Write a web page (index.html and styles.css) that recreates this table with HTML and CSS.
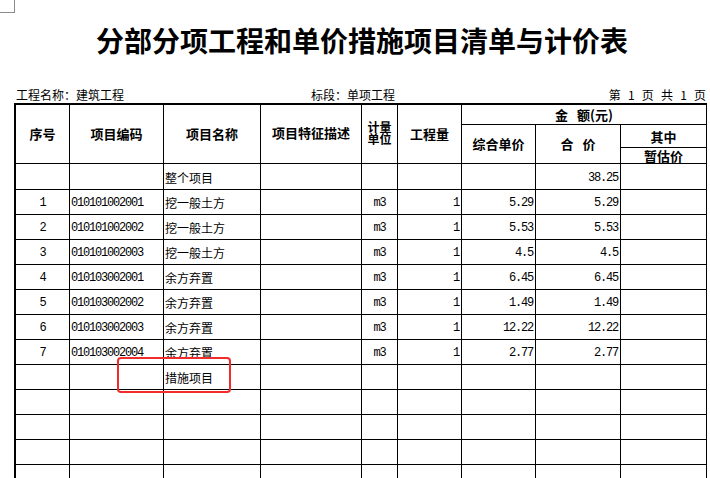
FILE: index.html
```html
<!DOCTYPE html>
<html lang="zh-CN">
<head>
<meta charset="utf-8">
<title>分部分项工程和单价措施项目清单与计价表</title>
<link rel="stylesheet" href="styles.css">
</head>
<body>
<div class="page">
  <div class="corner"></div>
  <h1 class="title">分部分项工程和单价措施项目清单与计价表</h1>
  <div class="meta">
    <span>工程名称：建筑工程</span>
    <span>标段：单项工程</span>
    <span class="pages">第 1 页 共 1 页</span>
  </div>
  <table class="bill">
    <colgroup>
      <col class="c1"><col class="c2"><col class="c3"><col class="c4"><col class="c5"><col class="c6"><col class="c7"><col class="c8"><col class="c9">
    </colgroup>
    <thead>
      <tr class="hr1">
        <th rowspan="3">序号</th>
        <th rowspan="3">项目编码</th>
        <th rowspan="3">项目名称</th>
        <th rowspan="3" class="desc">项目特征描述</th>
        <th rowspan="3" class="unit"><span class="ln">计量</span><span class="ln">单位</span></th>
        <th rowspan="3">工程量</th>
        <th colspan="3"><span class="gap">金</span>额(元)</th>
      </tr>
      <tr class="hr2">
        <th rowspan="2">综合单价</th>
        <th rowspan="2"><span class="gap">合</span>价</th>
        <th class="sub">其中</th>
      </tr>
      <tr class="hr3">
        <th class="sub">暂估价</th>
      </tr>
    </thead>
    <tbody>
      <tr class="first">
        <td></td><td></td><td class="name">整个项目</td><td></td><td></td><td></td><td></td><td class="num">38.25</td><td></td>
      </tr>
      <tr>
        <td class="seq">1</td><td class="code">010101002001</td><td class="name">挖一般土方</td><td></td><td class="mu">m3</td><td class="num">1</td><td class="num">5.29</td><td class="num">5.29</td><td></td>
      </tr>
      <tr>
        <td class="seq">2</td><td class="code">010101002002</td><td class="name">挖一般土方</td><td></td><td class="mu">m3</td><td class="num">1</td><td class="num">5.53</td><td class="num">5.53</td><td></td>
      </tr>
      <tr>
        <td class="seq">3</td><td class="code">010101002003</td><td class="name">挖一般土方</td><td></td><td class="mu">m3</td><td class="num">1</td><td class="num">4.5</td><td class="num">4.5</td><td></td>
      </tr>
      <tr>
        <td class="seq">4</td><td class="code">010103002001</td><td class="name">余方弃置</td><td></td><td class="mu">m3</td><td class="num">1</td><td class="num">6.45</td><td class="num">6.45</td><td></td>
      </tr>
      <tr>
        <td class="seq">5</td><td class="code">010103002002</td><td class="name">余方弃置</td><td></td><td class="mu">m3</td><td class="num">1</td><td class="num">1.49</td><td class="num">1.49</td><td></td>
      </tr>
      <tr>
        <td class="seq">6</td><td class="code">010103002003</td><td class="name">余方弃置</td><td></td><td class="mu">m3</td><td class="num">1</td><td class="num">12.22</td><td class="num">12.22</td><td></td>
      </tr>
      <tr>
        <td class="seq">7</td><td class="code">010103002004</td><td class="name">余方弃置</td><td></td><td class="mu">m3</td><td class="num">1</td><td class="num">2.77</td><td class="num">2.77</td><td></td>
      </tr>
      <tr>
        <td></td><td></td><td class="name">措施项目</td><td></td><td></td><td></td><td></td><td></td><td></td>
      </tr>
      <tr><td></td><td></td><td></td><td></td><td></td><td></td><td></td><td></td><td></td></tr>
      <tr><td></td><td></td><td></td><td></td><td></td><td></td><td></td><td></td><td></td></tr>
      <tr><td></td><td></td><td></td><td></td><td></td><td></td><td></td><td></td><td></td></tr>
      <tr><td></td><td></td><td></td><td></td><td></td><td></td><td></td><td></td><td></td></tr>
    </tbody>
  </table>
  <div class="highlight"></div>
</div>
</body>
</html>
```
FILE: styles.css
```css
html, body {
  margin: 0;
  padding: 0;
  background: #fff;
}

body {
  font-family: "Noto Sans CJK SC", "Noto Sans", sans-serif;
  color: #000;
  overflow: hidden;
}

.page {
  position: relative;
  width: 710px;
  height: 478px;
  overflow: hidden;
}

.corner {
  width: 14px;
  height: 12px;
  border-right: 1px solid #8a8a8a;
  border-bottom: 1px solid #8a8a8a;
}

.title {
  margin: 10px 0 0 14px;
  width: 696px;
  height: 34px;
  text-align: center;
  font-size: 28px;
  line-height: 34px;
  font-weight: 700;
}

.meta {
  margin: 31px 0 0 14px;
  width: 692px;
  height: 14px;
  padding-left: 2px;
  box-sizing: border-box;
  display: grid;
  grid-template-columns: 295px 1fr auto;
  font-size: 12px;
  line-height: 14px;
  overflow: visible;
}

.meta .pages {
  word-spacing: 4.5px;
}

.bill {
  margin: 1px 0 0 14px;
  width: 693px;
  table-layout: fixed;
  border-collapse: separate;
  border-spacing: 0;
  border-left: 2px solid #000;
  border-top: 2px solid #000;
}

.c1 { width: 54px; }
.c2 { width: 94px; }
.c3 { width: 97px; }
.c4 { width: 101px; }
.c5 { width: 36px; }
.c6 { width: 64px; }
.c7 { width: 74px; }
.c8 { width: 85px; }
.c9 { width: 86px; }

.bill th,
.bill td {
  border-right: 1px solid #000;
  border-bottom: 1px solid #000;
  padding: 0;
  vertical-align: middle;
  white-space: nowrap;
}

.bill th {
  font-size: 13px;
  font-weight: 700;
  line-height: 14px;
  text-align: center;
}

.bill th .gap {
  margin-right: 9px;
}

.bill th.desc {
  padding-bottom: 3px;
}

.bill th.unit {
  font-size: 12px;
  line-height: 12px;
  padding-bottom: 2px;
}

.bill th.unit .ln {
  display: block;
  height: 12px;
  line-height: 12px;
}

.bill th.sub {
  line-height: 13px;
}

.hr1 { height: 20px; }
.hr2 { height: 23px; }
.hr3 { height: 16px; }

.bill tbody tr { height: 25px; }
.bill tbody tr.first { height: 26px; }

.bill td {
  font-size: 12px;
  line-height: 14px;
  padding-top: 2px;
}

.bill td.name {
  padding-left: 1px;
  text-align: left;
}

.bill td.seq,
.bill td.code,
.bill td.num,
.bill td.mu {
  font-family: "Liberation Mono", monospace;
  font-size: 12px;
  letter-spacing: -1.2px;
}

.bill td.seq { text-align: center; }
.bill td.mu { text-align: center; }
.bill td.code { padding-left: 1px; }
.bill td.num {
  text-align: right;
  padding-right: 2px;
}

.highlight {
  position: absolute;
  left: 117px;
  top: 357px;
  width: 114px;
  height: 36px;
  box-sizing: border-box;
  border: 2.5px solid #f22c2c;
  border-radius: 4px;
}
```
